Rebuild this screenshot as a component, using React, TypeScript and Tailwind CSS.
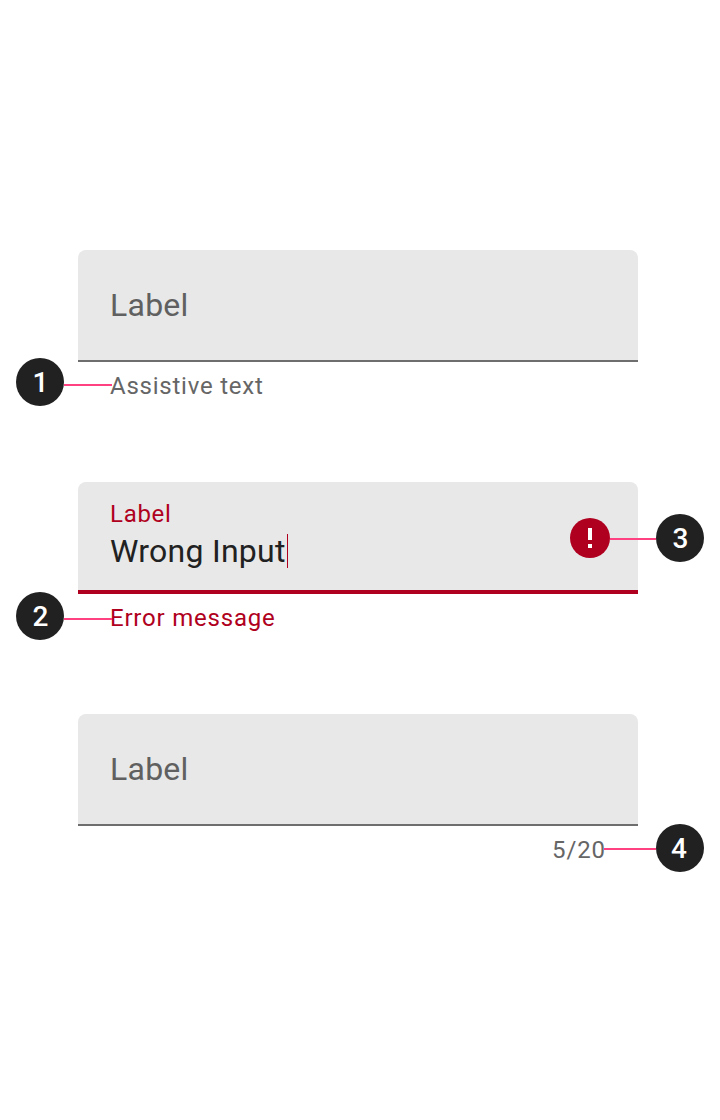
import type { ReactNode } from "react";

function Field({ children, error = false }: { children: ReactNode; error?: boolean }) {
  return (
    <div
      className={`flex h-28 items-center justify-between rounded-t-lg bg-[#e8e8e8] pr-7 pl-8 ${
        error ? "border-b-4 border-[#b00020]" : "border-b-2 border-[#6e6e6e]"
      }`}
    >
      {children}
    </div>
  );
}

function Badge({ children }: { children: ReactNode }) {
  return (
    <div className="flex size-12 shrink-0 items-center justify-center rounded-full bg-[#212121] pt-0.5 text-[28px] leading-none font-medium text-white">
      {children}
    </div>
  );
}

function Example({ children }: { children: ReactNode }) {
  return <section className="grid h-[232px] items-start *:[grid-area:1/1]">{children}</section>;
}

export default function App() {
  return (
    <main className="flex h-[1120px] w-[720px] flex-col bg-white pt-[250px] font-['Roboto',sans-serif]">
      <Example>
        <div className="ml-[78px] flex w-[560px] flex-col gap-2.5">
          <Field>
            <span className="text-[32px] leading-[38px] tracking-[0.25px] text-[#606060]">Label</span>
          </Field>
          <p className="pl-8 text-2xl leading-7 tracking-[0.77px] text-[#666666]">Assistive text</p>
        </div>
        <div className="flex items-center pt-[108px] pl-4">
          <Badge>
            <span className="pl-px">1</span>
          </Badge>
          <span className="mt-1.5 h-0.5 w-12 bg-[#ff4081]" />
        </div>
      </Example>

      <Example>
        <div className="ml-[78px] flex w-[560px] flex-col gap-2.5">
          <Field error>
            <div className="flex flex-col gap-1 pb-0.5">
              <span className="text-2xl leading-7 tracking-[0.7px] text-[#b00020]">Label</span>
              <span className="flex items-center text-[32px] leading-[38px] tracking-[0.25px] text-[#212121]">
                Wrong Input
                <span className="ml-[1.5px] h-[34px] w-px bg-[#b00020]" />
              </span>
            </div>
            <svg className="mt-1 size-10 self-center" viewBox="0 0 40 40" aria-label="Error">
              <circle cx="20" cy="20" r="20" fill="#b00020" />
              <path d="M18 10h4v12h-4zM18 26h4v4h-4z" fill="white" />
            </svg>
          </Field>
          <p className="pl-8 text-2xl leading-7 tracking-[0.8px] text-[#b00020]">Error message</p>
        </div>
        <div className="flex items-center pt-[110px] pl-4">
          <Badge>
            <span className="pl-px">2</span>
          </Badge>
          <span className="mt-1.5 h-0.5 w-12 bg-[#ff4081]" />
        </div>
        <div className="flex items-center justify-end pt-8 pr-4">
          <span className="mt-0.5 h-0.5 w-[46px] bg-[#ff4081]" />
          <Badge>
            <span className="pl-px">3</span>
          </Badge>
        </div>
      </Example>

      <Example>
        <div className="ml-[78px] flex w-[560px] flex-col gap-2.5">
          <Field>
            <span className="text-[32px] leading-[38px] tracking-[0.25px] text-[#606060]">Label</span>
          </Field>
          <p className="pr-8 text-right text-2xl leading-7 tracking-[0.9px] text-[#666666]">5/20</p>
        </div>
        <div className="flex items-center justify-end pt-[110px] pr-4">
          <span className="mt-0.5 h-0.5 w-[52px] bg-[#ff4081]" />
          <Badge>
            <span className="pr-0.5">4</span>
          </Badge>
        </div>
      </Example>
    </main>
  );
}
